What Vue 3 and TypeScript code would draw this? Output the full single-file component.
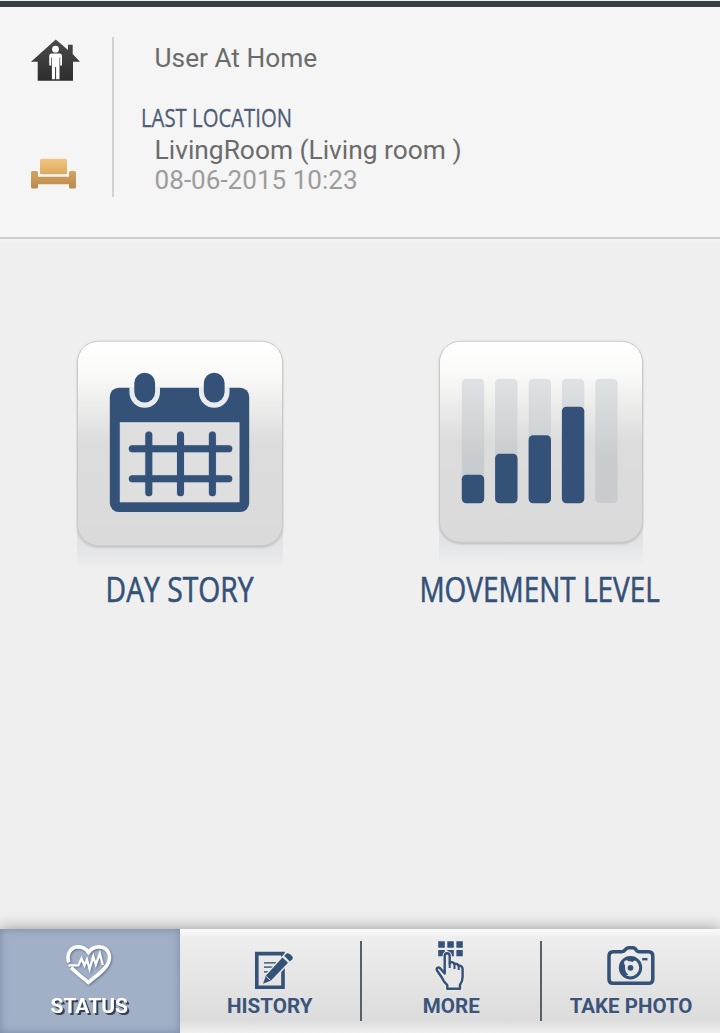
<script setup lang="ts">
interface Tab { id: string; label: string; x: number; width: number }

const tabs: Tab[] = [
  { id: 'status', label: 'STATUS', x: 50.5, width: 77.5 },
  { id: 'history', label: 'HISTORY', x: 47, width: 85.5 },
  { id: 'more', label: 'MORE', x: 62.8, width: 57 },
  { id: 'photo', label: 'TAKE PHOTO', x: 29.7, width: 122.7 },
]
const active = 'status'

const bars = [
  { x: 461.8, top: 474.8 },
  { x: 495.1, top: 453.8 },
  { x: 528.6, top: 435.3 },
  { x: 561.9, top: 406.8 },
  { x: 595.2, top: 503 },
]
const rings = [144.7, 214.2]
const columns = [148.8, 180.5, 212.4]
const rows = [448.7, 478.7]
const hand = 'M87.3 988.8V985.2C85 983 83 980.5 81.5 977L77 970.5C75.5 967.5 79 966.5 80.8 969L84.7 973.5V956.5C84.7 952.2 89.7 952.2 89.7 956.5V963.5C90.5 961.5 94 961.8 94.5 964.2C96.2 963.2 98.3 964.3 98.7 966C100.7 965.2 102.6 966.8 102.6 969V977C102.6 980.5 101.3 983 100 985V988.8Z'
</script>

<template>
  <main class="screen">
    <div class="system-bar"></div>
    <header class="summary">
      <div class="summary-icons">
        <svg class="house" width="50" height="42" viewBox="30 39 50 42">
          <defs>
            <linearGradient id="roof" x1="0" y1="0" x2="0" y2="1">
              <stop offset="0" stop-color="#4b4b4b" /><stop offset="1" stop-color="#2d2d2d" />
            </linearGradient>
          </defs>
          <path d="M55.8 39.5 68 50V44.7H72.7V54L80 61.8H73V80.8H37.7V61.8H31Z" fill="url(#roof)" />
          <circle cx="55.5" cy="49.2" r="3.4" fill="#fff" />
          <path d="M51 53.6H60Q62 53.8 62 56V65.5H60.2V57.5H59.5V79.2H56.1V67H55.1V79.2H51.9V57.5H51.2V65.5H49.2V56Q49.2 53.8 51 53.6Z" fill="#fff" />
        </svg>
        <svg class="sofa" width="46" height="31" viewBox="31 158 46 31">
          <defs>
            <linearGradient id="cushion" x1="0" y1="0" x2="0" y2="1">
              <stop offset="0" stop-color="#f1c57f" /><stop offset="1" stop-color="#dda960" />
            </linearGradient>
            <linearGradient id="seat" x1="0" y1="0" x2="0" y2="1">
              <stop offset="0" stop-color="#d4a35e" /><stop offset="1" stop-color="#b98b4e" />
            </linearGradient>
          </defs>
          <rect x="40" y="158.8" width="27" height="15.4" rx="1.5" fill="url(#cushion)" />
          <path d="M32.5 171H36.5Q38 171 38 172.5V176.7H69V172.5Q69 171 70.5 171H74.5Q76 171 76 172.5V187Q76 188.5 74.5 188.5H70.5Q69 188.5 69 187V184.2H38V187Q38 188.5 36.5 188.5H32.5Q31 188.5 31 187V172.5Q31 171 32.5 171Z" fill="url(#seat)" />
        </svg>
      </div>
      <div class="rule"></div>
      <svg class="details" width="400" height="170" viewBox="130 37 400 170">
        <text class="body" x="154.6" y="67" textLength="162.5" lengthAdjust="spacingAndGlyphs">User At Home</text>
        <text class="caption" x="141" y="127" textLength="151" lengthAdjust="spacingAndGlyphs">LAST LOCATION</text>
        <text class="body" x="154.6" y="159" textLength="307" lengthAdjust="spacingAndGlyphs">LivingRoom (Living room )</text>
        <text class="body date" x="154.6" y="189" textLength="203" lengthAdjust="spacingAndGlyphs">08-06-2015 10:23</text>
      </svg>
    </header>

    <section class="actions">
      <svg class="action" width="360" height="300" viewBox="0 330 360 300">
        <defs>
          <linearGradient id="tile" x1="0" y1="0" x2="0" y2="1">
            <stop offset="0" stop-color="#fff" /><stop offset="0.16" stop-color="#fafaf9" />
            <stop offset="0.5" stop-color="#dcdcdc" /><stop offset="1" stop-color="#dadada" />
          </linearGradient>
          <linearGradient id="reflection" x1="0" y1="0" x2="0" y2="1">
            <stop offset="0" stop-color="#dddee0" /><stop offset="0.4" stop-color="#e2e3e5" /><stop offset="1" stop-color="#f0f0f0" />
          </linearGradient>
          <filter id="lift" x="-10%" y="-10%" width="120%" height="120%">
            <feDropShadow dx="0" dy="1.2" stdDeviation="1.1" flood-color="#777" flood-opacity="0.4" />
          </filter>
        </defs>
        <path d="M77 526H283V563Q283 570 270 572H90Q77 570 77 563Z" fill="url(#reflection)" />
        <rect x="77.5" y="341.2" width="205" height="204.5" rx="21" fill="url(#tile)" stroke="#cacaca" filter="url(#lift)" />
        <rect x="109.8" y="387.7" width="139.4" height="124.4" rx="9" fill="#345178" />
        <rect x="120.3" y="422.8" width="118.7" height="79" fill="#dfdfdf" stroke="#e4e6ea" />
        <g v-for="cx in rings" :key="cx">
          <path :d="`M${cx - 15.3} 387V392A15.3 15.8 0 0 0 ${cx + 15.3} 392V387Z`" fill="#e9ebee" />
          <rect :x="cx - 10.4" y="372.7" width="20.8" height="29.8" rx="10.4" fill="#345178" />
        </g>
        <g fill="none" stroke-linecap="round">
          <g stroke="#c5ccd8" stroke-width="8">
            <path v-for="x in columns" :key="x" :d="`M${x} 435V492.7`" />
            <path v-for="y in rows" :key="y" :d="`M132.3 ${y}H228.8`" />
          </g>
          <g stroke="#345178" stroke-width="7">
            <path v-for="x in columns" :key="x" :d="`M${x} 435V492.7`" />
            <path v-for="y in rows" :key="y" :d="`M132.3 ${y}H228.8`" />
          </g>
        </g>
        <text class="title" x="105.6" y="602" textLength="148" lengthAdjust="spacingAndGlyphs">DAY STORY</text>
      </svg>

      <svg class="action" width="360" height="300" viewBox="360 330 360 300">
        <defs>
          <linearGradient id="track" x1="0" y1="0" x2="0" y2="1">
            <stop offset="0" stop-color="#dfe2e5" /><stop offset="0.65" stop-color="#c9cccf" /><stop offset="1" stop-color="#c9cbce" />
          </linearGradient>
        </defs>
        <path d="M439 522H643V559Q643 566 630 569H452Q439 566 439 559Z" fill="url(#reflection)" />
        <rect x="439.5" y="341.2" width="203" height="201" rx="21" fill="url(#tile)" stroke="#cacaca" filter="url(#lift)" />
        <g v-for="bar in bars" :key="bar.x">
          <rect :x="bar.x" y="378.7" width="22.4" height="124.3" rx="4.5" fill="url(#track)" />
          <rect v-if="bar.top < 503" :x="bar.x" :y="bar.top" width="22.4" :height="503.3 - bar.top" rx="4.5" fill="#345178" />
        </g>
        <text class="title" x="419.4" y="602" textLength="240.5" lengthAdjust="spacingAndGlyphs">MOVEMENT LEVEL</text>
      </svg>
    </section>

    <nav class="tabs">
      <div v-for="tab in tabs" :key="tab.id" class="tab" :class="{ active: tab.id === active }">
        <svg class="glyph" width="180" height="62" viewBox="0 929 180 62" fill="none">
          <g v-if="tab.id === 'status'" class="pulse" stroke="#fff">
            <path d="M68.7 962.5C66.5 955 70 947.2 77.5 946.9C82.5 946.7 86.5 949 88.5 952.5C91 949 94.5 946.7 99.5 946.9C107.5 947.2 111.2 954.5 108.7 962C106.5 968.5 98.5 974 88.5 982.5C80 975.5 75 972 71.2 967.5" stroke-width="3.6" />
            <path d="M68.5 965.4H78.3L81.5 958.5L84.5 965.5L87 959.5L89.6 969L93.3 956.5L95.8 964.5L99.8 953.5L102.8 965" stroke-width="2.3" />
          </g>
          <g v-else-if="tab.id === 'history'" stroke="#345178">
            <path d="M76.8 953.6H103V987.3H76.8Z" stroke-width="3.6" />
            <path d="M84 962.8H96M84 967.2H93M84 971.8H88" stroke-width="1.8" stroke="#5a7088" />
            <path d="M88 979 110 955" stroke="#e8e8e8" stroke-width="10" />
            <path d="M83 983.7 86 975.5 102.5 957.5 108 962.7 91 980.5Z" fill="#345178" stroke="none" />
            <path d="M104.2 955.7 106.5 953.5Q108.5 952.8 111 955Q113.7 957.5 112.3 959.2L109.8 961.4Z" fill="#345178" stroke="none" />
            <path d="M86.3 976.6 90.4 980.2" stroke="#e8e8e8" stroke-width="1" />
          </g>
          <g v-else-if="tab.id === 'more'">
            <path d="M78.2 941.3H84.8V947.7H78.2ZM87.3 941.3H93.8V947.7H87.3ZM96.4 941.3H102.8V947.7H96.4ZM78.2 949.9H84.8V956.3H78.2ZM87.3 949.9H93.8V956.3H87.3ZM96.4 949.9H102.8V956.3H96.4Z" fill="#345178" />
            <path :d="hand" fill="#ebebeb" stroke="#ebebeb" stroke-width="4.5" />
            <path :d="hand" fill="#e8e8e8" stroke="#345178" stroke-width="2.4" stroke-linejoin="round" />
            <path d="M89.7 963V968M94.5 964V969M98.7 966V970" stroke="#345178" stroke-width="2" />
          </g>
          <g v-else stroke="#345178">
            <path d="M73 951.7H81.5Q84 951.7 85.3 949.8Q86.5 947.7 89 947.7H92.5Q95 947.7 96 949.8Q97 951.7 99.5 951.7H108.5Q112.8 951.7 112.8 956V979Q112.8 983.3 108.5 983.3H73Q69 983.3 69 979V956Q69 951.7 73 951.7Z" stroke-width="3.5" />
            <path d="M102.2 959.2H107.5" stroke-width="2.4" />
            <circle cx="90.5" cy="967.7" r="10.2" stroke-width="3" />
            <path d="M80.5 968A10 10 0 0 1 96 959.6L92.5 962Q89 960 86 963Q84 966 85.2 970Q86 973 88.5 975Q81 976 80.5 968Z" fill="#345178" stroke="none" />
            <circle cx="86.5" cy="962.8" r="2.5" fill="#e8e8e8" stroke="none" />
            <circle cx="90.5" cy="967.8" r="2.9" fill="#345178" stroke="none" />
          </g>
        </svg>
        <svg class="label" width="180" height="30" viewBox="0 991 180 30">
          <text :x="tab.x" y="1013" :textLength="tab.width" lengthAdjust="spacingAndGlyphs">{{ tab.label }}</text>
        </svg>
      </div>
    </nav>
  </main>
</template>

<style>
body {
  margin: 0;
}
</style>

<style scoped>
.screen {
  display: flex;
  flex-direction: column;
  box-sizing: border-box;
  width: 720px;
  height: 1033px;
  padding-top: 1px;
  overflow: hidden;
  background: #efefef;
}
svg {
  display: block;
}
.system-bar {
  flex: none;
  height: 6px;
  background: #343e43;
}
.summary {
  display: flex;
  flex: none;
  box-sizing: border-box;
  height: 232px;
  padding: 30px 0 0 30px;
  border-bottom: 2px solid #cdcdcd;
  background: #f5f5f5;
  box-shadow: 0 2px 2px #f4f4f4;
}
.summary-icons {
  display: flex;
  flex-direction: column;
  gap: 77px;
  width: 82px;
  padding-top: 2px;
}
.sofa {
  margin-left: 1px;
}
.rule {
  width: 2px;
  height: 160px;
  background: #d2d2d2;
}
.details {
  margin-left: 16px;
}
.body {
  font: 26px Roboto, sans-serif;
  fill: #6b6b6b;
}
.date {
  fill: #9c9c9c;
}
.caption {
  font: 25px "Open Sans", sans-serif;
  fill: #4f5d76;
  stroke: #4f5d76;
  stroke-width: 0.3px;
}
.actions {
  display: flex;
  flex: none;
  padding-top: 91px;
}
.title {
  font: 34px "Open Sans", sans-serif;
  fill: #345178;
  stroke: #345178;
  stroke-width: 0.6px;
}
.tabs {
  display: grid;
  grid-template-columns: repeat(4, 180px);
  flex: none;
  height: 104px;
  margin-top: auto;
  background: linear-gradient(#fafafa, #eeeeee 8%, #dcdcdc 88%, #efefef);
  box-shadow: 0 -1px 14px rgb(0 0 0 / 35%);
}
.tab {
  position: relative;
}
.tab:nth-child(n + 3)::before {
  position: absolute;
  top: 12px;
  left: 0;
  width: 2px;
  height: 80px;
  background: #566069;
  content: "";
}
.active {
  background: #a1b0c7;
  box-shadow: inset 0 0 9px #7988a1;
}
.pulse {
  filter: drop-shadow(1.5px 1.5px 1px #65748a);
}
.label text {
  font: bold 20px Roboto, sans-serif;
  fill: #3a547a;
}
.active .label text {
  fill: #fff;
  filter: drop-shadow(2px 2px 0.7px #364253);
}
</style>
